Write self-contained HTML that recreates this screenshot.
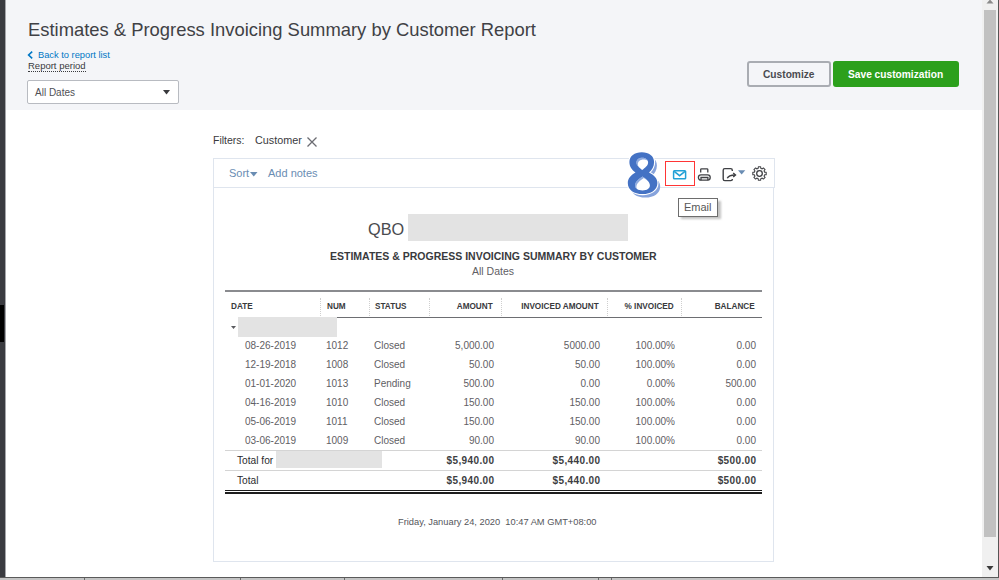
<!DOCTYPE html>
<html><head><meta charset="utf-8">
<title>Estimates &amp; Progress Invoicing Summary by Customer Report</title>
<style>
*{margin:0;padding:0;box-sizing:border-box}
html,body{width:999px;height:580px;overflow:hidden;background:#fff;font-family:"Liberation Sans",sans-serif;color:#393a3d}
.a{position:absolute;white-space:pre;line-height:1}
.b{position:absolute}
#hdr{left:6px;top:0;width:976px;height:110px;background:#f4f5f8}
#lstrip{left:0;top:0;width:5px;height:577px;background:#3a3b40}
#lstrip2{left:5px;top:0;width:1px;height:577px;background:#a5a6aa}
#blk{left:0;top:305px;width:4px;height:37px;background:#000}
#sb{left:982px;top:0;width:16px;height:577px;background:#f0f0f0}
#thumb{left:984px;top:10px;width:12px;height:527px;background:#c1c1c1}
#rdark{left:998px;top:0;width:1px;height:580px;background:#555}
#bdark{left:0;top:577px;width:999px;height:1px;background:#5a5a5a}
#bgray{left:0;top:578px;width:999px;height:2px;background:#c4c4c4}
.title{left:28px;font-size:18.4px;color:#404145}
.back{left:38px;font-size:9.3px;color:#0077c5}
.rp{left:28px;font-size:9.5px;color:#393a3d}
#dd{left:27px;top:80px;width:152px;height:24px;background:#fff;border:1px solid #b8bbc1;border-radius:2px}
#btn1{left:747px;top:61px;width:84px;height:26px;border:2px solid #a9acb2;border-radius:3px}
#btn2{left:833px;top:61px;width:126px;height:26px;background:#2ca01c;border-radius:3px}
#tb{left:213px;top:158px;width:562px;height:30px;border:1px solid #dfe5ee}
#body{left:213px;top:187px;width:561px;height:375px;border:1px solid #dfe5ee;border-top:none}
.lnk{color:#6a8db3;font-size:11px}
.th{font-size:8.2px;font-weight:bold;color:#393a3d}
.td{font-size:10px;color:#5f6064}
.tot{font-size:10.2px;color:#2b2c30}
.totb{font-size:10px;font-weight:bold;color:#3d3e42;letter-spacing:0.37px}
.vd{position:absolute;top:298px;width:0;height:20px;border-left:1px dotted #cfcfcf}
.hl{position:absolute;left:225px;width:537px;height:1px}
</style></head><body>
<div class="b" id="hdr"></div>
<div class="b" id="lstrip"></div><div class="b" id="lstrip2"></div><div class="b" id="blk"></div>

<div class="a title" style="top:21px">Estimates &amp; Progress Invoicing Summary by Customer Report</div>
<svg class="b" style="left:27px;top:51px" width="7" height="8" viewBox="0 0 7 8"><path d="M5.2 0.6 L1.6 4 L5.2 7.4" stroke="#0077c5" stroke-width="1.6" fill="none"/></svg>
<div class="a back" style="top:51px">Back to report list</div>
<div class="a rp" style="top:61px">Report period</div>
<div class="b" style="left:28px;top:71px;width:58px;height:0;border-top:1px dotted #393a3d"></div>
<div class="b" id="dd"></div>
<div class="a" style="left:35px;top:88px;font-size:10px;color:#4f5055">All Dates</div>
<svg class="b" style="left:163px;top:90px" width="7" height="5"><path d="M0 0 H7 L3.5 4.5Z" fill="#393a3d"/></svg>
<div class="b" id="btn1"></div>
<div class="a" style="left:763px;top:69.5px;font-size:10.2px;font-weight:bold;color:#4a4b50">Customize</div>
<div class="b" id="btn2"></div>
<div class="a" style="left:848px;top:69.5px;font-size:10.2px;font-weight:bold;color:#fff">Save customization</div>

<div class="b" id="sb"></div><div class="b" id="thumb"></div>
<svg class="b" style="left:985px;top:-1px" width="10" height="5"><path d="M1.5 4.5 H8.5 L5 0.5Z" fill="#8a8a8a"/></svg>
<svg class="b" style="left:986px;top:566px" width="8" height="5"><path d="M0.5 0 H7.5 L4 4.5Z" fill="#3a3a3a"/></svg>
<div class="b" id="rdark"></div><div class="b" id="bdark"></div><div class="b" id="bgray"></div><div class="b" style="left:84px;top:578px;width:1px;height:2px;background:#6a6a6a"></div><div class="b" style="left:240px;top:578px;width:1px;height:2px;background:#6a6a6a"></div><div class="b" style="left:344px;top:578px;width:1px;height:2px;background:#6a6a6a"></div><div class="b" style="left:502px;top:578px;width:1px;height:2px;background:#6a6a6a"></div><div class="b" style="left:598px;top:578px;width:1px;height:2px;background:#6a6a6a"></div><div class="b" style="left:611px;top:578px;width:1px;height:2px;background:#6a6a6a"></div>

<div class="a" style="left:213px;top:135px;font-size:10.5px;color:#393a3d">Filters:</div>
<div class="a" style="left:255px;top:135px;font-size:10.8px;color:#393a3d">Customer</div>
<svg class="b" style="left:307px;top:137px" width="10" height="10"><path d="M0.5 0.5 L9.5 9.5 M9.5 0.5 L0.5 9.5" stroke="#6b6c72" stroke-width="1.3"/></svg>

<div class="b" id="tb"></div>
<div class="b" id="body"></div>
<div class="a lnk" style="left:229px;top:168px">Sort</div>
<svg class="b" style="left:250px;top:172px" width="8" height="5"><path d="M0 0 H7.5 L3.75 4.5Z" fill="#6a8db3"/></svg>
<div class="a lnk" style="left:268px;top:168px">Add notes</div>

<!-- toolbar icons -->
<div class="b" style="left:665px;top:161px;width:30px;height:24.5px;border:1.6px solid #ff3535"></div>
<svg class="b" style="left:672px;top:169px" width="15" height="11" viewBox="0 0 15 11"><rect x="1.6" y="1.7" width="12" height="8" rx="0.8" fill="none" stroke="#23a1d6" stroke-width="1.5"/><path d="M2.2 2.3 L7.6 6.7 L13 2.3" fill="none" stroke="#23a1d6" stroke-width="1.5"/></svg>
<svg class="b" style="left:696px;top:166px" width="16" height="16" viewBox="0 0 16 16"><path d="M4.7 6.6 V3.6 Q4.7 2.8 5.5 2.8 H11 Q11.8 2.8 11.8 3.6 V6.6" fill="none" stroke="#3f4044" stroke-width="1.3"/><rect x="2.4" y="8.9" width="11.8" height="5.3" rx="2.6" fill="none" stroke="#3f4044" stroke-width="1.3"/><path d="M5 14.2 V11.5 H11.9 V14.2" fill="none" stroke="#3f4044" stroke-width="1.3"/></svg>
<svg class="b" style="left:721px;top:166px" width="17" height="16" viewBox="0 0 17 16"><path d="M11.3 4.9 V4.2 Q11.3 2.6 9.7 2.6 H3.8 Q2.2 2.6 2.2 4.2 V13 Q2.2 14.6 3.8 14.6 H9.8 Q11.4 14.6 11.4 13" fill="none" stroke="#3f4044" stroke-width="1.4"/><path d="M6.3 12.3 Q7.5 9.2 14.2 9" fill="none" stroke="#3f4044" stroke-width="1.4"/><path d="M12.2 7 L14.5 9 L12.2 11.1" fill="none" stroke="#3f4044" stroke-width="1.4"/></svg>
<svg class="b" style="left:738px;top:170px" width="8" height="5"><path d="M0 0.2 H7.3 L3.65 4.6Z" fill="#6a8db3"/></svg>
<svg class="b" style="left:750.6px;top:165px" width="17" height="17" viewBox="0 0 17 17"><path fill="none" stroke="#3f4044" stroke-width="1.05" stroke-linejoin="round" d="M7.22 3.36 L7.32 1.80 L9.68 1.80 L9.78 3.36 L11.23 3.96 L12.40 2.93 L14.07 4.60 L13.04 5.77 L13.64 7.22 L15.20 7.32 L15.20 9.68 L13.64 9.78 L13.04 11.23 L14.07 12.40 L12.40 14.07 L11.23 13.04 L9.78 13.64 L9.68 15.20 L7.32 15.20 L7.22 13.64 L5.77 13.04 L4.60 14.07 L2.93 12.40 L3.96 11.23 L3.36 9.78 L1.80 9.68 L1.80 7.32 L3.36 7.22 L3.96 5.77 L2.93 4.60 L4.60 2.93 L5.77 3.96Z"/><circle cx="8.5" cy="8.5" r="2.8" fill="none" stroke="#3f4044" stroke-width="1.3"/></svg>

<!-- big 8 badge -->
<svg class="b" style="left:622px;top:148px" width="44" height="56" viewBox="0 0 44 56">
<path d="M19.8 4.2 C27 4.2 32.1 8 32.1 14 C32.1 18.5 30 22 27 24.5 C32 27 35.4 30.5 35.4 35 C35.4 42 29 46.1 20.6 46.1 C12 46.1 5.8 42 5.8 35 C5.8 30.5 9 27 13.5 24.5 C10 22 7.4 18.5 7.4 14 C7.4 8 12.5 4.2 19.8 4.2 Z" transform="translate(2.8,3.4)" fill="#86a3dc"/>
<path d="M19.8 4.2 C27 4.2 32.1 8 32.1 14 C32.1 18.5 30 22 27 24.5 C32 27 35.4 30.5 35.4 35 C35.4 42 29 46.1 20.6 46.1 C12 46.1 5.8 42 5.8 35 C5.8 30.5 9 27 13.5 24.5 C10 22 7.4 18.5 7.4 14 C7.4 8 12.5 4.2 19.8 4.2 Z" fill="#fff" stroke="#fff" stroke-width="2.2"/>
<path d="M20.2 9.8 C24 9.8 26.1 12 26.1 14.5 C26.1 17.5 23 20 20.2 21.9 C17.5 20 14.4 17.5 14.4 14.5 C14.4 12 16.5 9.8 20.2 9.8 Z M20.5 28.4 C24.5 31 27.9 34 27.9 37.5 C27.9 40.5 25 42.4 20.5 42.4 C16 42.4 13 40.5 13 37.5 C13 34 16.5 31 20.5 28.4 Z" fill="#8eaadf"/>
<path d="M20.2 9.8 C24 9.8 26.1 12 26.1 14.5 C26.1 17.5 23 20 20.2 21.9 C17.5 20 14.4 17.5 14.4 14.5 C14.4 12 16.5 9.8 20.2 9.8 Z M20.5 28.4 C24.5 31 27.9 34 27.9 37.5 C27.9 40.5 25 42.4 20.5 42.4 C16 42.4 13 40.5 13 37.5 C13 34 16.5 31 20.5 28.4 Z" transform="translate(1.4,1.6)" fill="#fff"/>
<path fill-rule="evenodd" d="M19.8 4.2 C27 4.2 32.1 8 32.1 14 C32.1 18.5 30 22 27 24.5 C32 27 35.4 30.5 35.4 35 C35.4 42 29 46.1 20.6 46.1 C12 46.1 5.8 42 5.8 35 C5.8 30.5 9 27 13.5 24.5 C10 22 7.4 18.5 7.4 14 C7.4 8 12.5 4.2 19.8 4.2 Z M20.2 9.8 C24 9.8 26.1 12 26.1 14.5 C26.1 17.5 23 20 20.2 21.9 C17.5 20 14.4 17.5 14.4 14.5 C14.4 12 16.5 9.8 20.2 9.8 Z M20.5 28.4 C24.5 31 27.9 34 27.9 37.5 C27.9 40.5 25 42.4 20.5 42.4 C16 42.4 13 40.5 13 37.5 C13 34 16.5 31 20.5 28.4 Z" fill="#4472c4"/>
</svg>

<!-- tooltip -->
<div class="b" style="left:681px;top:201px;width:40px;height:18px;background:#9a9a9a;opacity:.6;filter:blur(1px)"></div>
<div class="b" style="left:678px;top:198px;width:40px;height:19px;background:#fff;border:1px solid #6d6d6d"></div>
<div class="a" style="left:684px;top:202px;font-size:11px;color:#575757">Email</div>

<!-- report header -->
<div class="a" style="left:368px;top:220.8px;font-size:16.3px;color:#4a4b4f;font-weight:normal">QBO</div>
<div class="b" style="left:408px;top:214px;width:220px;height:27px;background:#e3e3e3"></div>
<div class="a" style="left:330px;top:251px;font-size:10.5px;font-weight:bold;color:#393a3d">ESTIMATES &amp; PROGRESS INVOICING SUMMARY BY CUSTOMER</div>
<div class="a" style="left:472px;top:266px;font-size:10.5px;color:#5f6064">All Dates</div>

<!-- table lines -->
<div class="hl" style="top:290px;height:2px;background:#8a8b8f"></div>
<div class="vd" style="left:320px"></div>
<div class="vd" style="left:369px"></div>
<div class="vd" style="left:429px"></div>
<div class="vd" style="left:501px"></div>
<div class="vd" style="left:607px"></div>
<div class="vd" style="left:681px"></div>
<div class="hl" style="left:337px;width:425px;top:317px;background:#6d6e72"></div>
<svg class="b" style="left:231px;top:326px" width="5" height="3"><path d="M0 0 H5 L2.5 3Z" fill="#5a5b5f"/></svg>
<div class="b" style="left:238px;top:317px;width:99px;height:20px;background:#e3e3e3"></div>
<div class="hl" style="top:450px;background:#d4d4d4"></div>
<div class="b" style="left:276px;top:451px;width:106px;height:17px;background:#e3e3e3"></div>
<div class="hl" style="top:470px;background:#d4d4d4"></div>
<div class="hl" style="top:490px;height:1.3px;background:#1e1e1e"></div>
<div class="hl" style="top:492.3px;height:1.3px;background:#1e1e1e"></div>

<div class="a th" style="left:231px;top:302.90px;">DATE</div>
<div class="a th" style="left:327px;top:302.90px;">NUM</div>
<div class="a th" style="left:375px;top:302.90px;">STATUS</div>
<div class="a th" style="right:506.3px;top:302.90px;">AMOUNT</div>
<div class="a th" style="right:400.29999999999995px;top:302.90px;">INVOICED AMOUNT</div>
<div class="a th" style="right:325.29999999999995px;top:302.90px;">% INVOICED</div>
<div class="a th" style="right:244.29999999999995px;top:302.90px;">BALANCE</div>
<div class="a td" style="left:245px;top:341.30px;">08-26-2019</div>
<div class="a td" style="left:326px;top:341.30px;">1012</div>
<div class="a td" style="left:374px;top:341.30px;">Closed</div>
<div class="a td" style="right:505px;top:341.30px;">5,000.00</div>
<div class="a td" style="right:399px;top:341.30px;">5000.00</div>
<div class="a td" style="right:324px;top:341.30px;">100.00%</div>
<div class="a td" style="right:243px;top:341.30px;">0.00</div>
<div class="a td" style="left:245px;top:360.24px;">12-19-2018</div>
<div class="a td" style="left:326px;top:360.24px;">1008</div>
<div class="a td" style="left:374px;top:360.24px;">Closed</div>
<div class="a td" style="right:505px;top:360.24px;">50.00</div>
<div class="a td" style="right:399px;top:360.24px;">50.00</div>
<div class="a td" style="right:324px;top:360.24px;">100.00%</div>
<div class="a td" style="right:243px;top:360.24px;">0.00</div>
<div class="a td" style="left:245px;top:379.18px;">01-01-2020</div>
<div class="a td" style="left:326px;top:379.18px;">1013</div>
<div class="a td" style="left:374px;top:379.18px;">Pending</div>
<div class="a td" style="right:505px;top:379.18px;">500.00</div>
<div class="a td" style="right:399px;top:379.18px;">0.00</div>
<div class="a td" style="right:324px;top:379.18px;">0.00%</div>
<div class="a td" style="right:243px;top:379.18px;">500.00</div>
<div class="a td" style="left:245px;top:398.12px;">04-16-2019</div>
<div class="a td" style="left:326px;top:398.12px;">1010</div>
<div class="a td" style="left:374px;top:398.12px;">Closed</div>
<div class="a td" style="right:505px;top:398.12px;">150.00</div>
<div class="a td" style="right:399px;top:398.12px;">150.00</div>
<div class="a td" style="right:324px;top:398.12px;">100.00%</div>
<div class="a td" style="right:243px;top:398.12px;">0.00</div>
<div class="a td" style="left:245px;top:417.06px;">05-06-2019</div>
<div class="a td" style="left:326px;top:417.06px;">1011</div>
<div class="a td" style="left:374px;top:417.06px;">Closed</div>
<div class="a td" style="right:505px;top:417.06px;">150.00</div>
<div class="a td" style="right:399px;top:417.06px;">150.00</div>
<div class="a td" style="right:324px;top:417.06px;">100.00%</div>
<div class="a td" style="right:243px;top:417.06px;">0.00</div>
<div class="a td" style="left:245px;top:436.00px;">03-06-2019</div>
<div class="a td" style="left:326px;top:436.00px;">1009</div>
<div class="a td" style="left:374px;top:436.00px;">Closed</div>
<div class="a td" style="right:505px;top:436.00px;">90.00</div>
<div class="a td" style="right:399px;top:436.00px;">90.00</div>
<div class="a td" style="right:324px;top:436.00px;">100.00%</div>
<div class="a td" style="right:243px;top:436.00px;">0.00</div>
<div class="a tot" style="left:237px;top:456.20px;">Total for</div>
<div class="a totb" style="right:504.6px;top:456.20px;">$5,940.00</div>
<div class="a totb" style="right:398.6px;top:456.20px;">$5,440.00</div>
<div class="a totb" style="right:242.60000000000002px;top:456.20px;">$500.00</div>
<div class="a tot" style="left:237px;top:475.70px;">Total</div>
<div class="a totb" style="right:504.6px;top:475.70px;">$5,940.00</div>
<div class="a totb" style="right:398.6px;top:475.70px;">$5,440.00</div>
<div class="a totb" style="right:242.60000000000002px;top:475.70px;">$500.00</div>


<div class="a" style="left:398px;top:518px;font-size:9.3px;color:#55565b">Friday, January 24, 2020  10:47 AM GMT+08:00</div>
</body></html>
